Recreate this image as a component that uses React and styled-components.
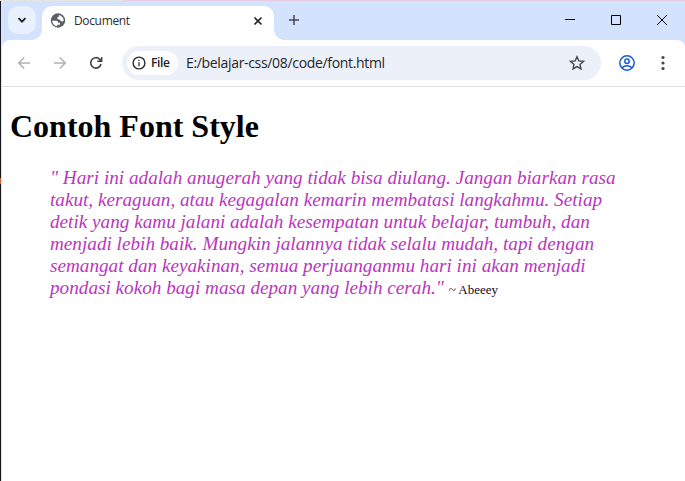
import React from "react";
import styled, { createGlobalStyle } from "styled-components";

const GlobalStyle = createGlobalStyle`
  * { box-sizing: border-box; }
  body { margin: 0; background: #fff; overflow: hidden; }
`;

const Desktop = styled.div`
  width: 685px;
  height: 481px;
  display: flex;
  flex-direction: column;
  background: linear-gradient(#181620 0 178px, #c9683e 178px 184px, #181620 184px);
`;

const TopEdge = styled.div`
  height: 1px;
  flex: none;
  background: linear-gradient(90deg, #e4e4e2 0 123px, #e6cbe2 123px);
`;

const Window = styled.div`
  flex: 1;
  margin-left: 1px;
  border-left: 1px solid #eadfe8;
  display: flex;
  flex-direction: column;
  background: #fff;
`;

const TabStrip = styled.div`
  height: 39px;
  flex: none;
  display: flex;
  align-items: flex-start;
  background: #d3e2fd;
`;

const TabSearch = styled.button`
  width: 28px;
  height: 28px;
  margin: 5px 0 0 6px;
  padding: 0;
  border: 0;
  border-radius: 10px;
  background: #e9f0fe;
  display: grid;
  place-items: center;
`;

const Tab = styled.div`
  position: relative;
  width: 232px;
  height: 34px;
  margin: 5px 0 0 6px;
  padding: 0 11px 5px 8px;
  display: flex;
  align-items: center;
  background: #fff;
  border-radius: 10px 10px 0 0;
  &::before, &::after {
    content: "";
    position: absolute;
    bottom: 0;
    width: 10px;
    height: 10px;
  }
  &::before {
    left: -10px;
    background: radial-gradient(circle at 0 0, transparent 9.5px, #fff 10px);
  }
  &::after {
    right: -10px;
    background: radial-gradient(circle at 100% 0, transparent 9.5px, #fff 10px);
  }
`;

const TabTitle = styled.span`
  flex: 1;
  margin-left: 8px;
  font: 12px/16px "Open Sans", "Noto Sans", sans-serif;
  letter-spacing: -0.35px;
  color: #2b2d30;
`;

const NewTab = styled.div`
  margin: 13px 0 0 14px;
  display: flex;
`;

const WindowControls = styled.div`
  margin: 14px 17px 0 auto;
  display: flex;
  gap: 34px;
`;

const ToolbarFrame = styled.div`
  flex: none;
  background: #d3e2fd;
`;

const Toolbar = styled.div`
  height: 47px;
  display: flex;
  align-items: center;
  padding: 0 14px 0 14px;
  background: #fff;
  border-bottom: 1px solid #dfdfe1;
  border-radius: 8px 8px 0 0;
`;

const NavButtons = styled.div`
  display: flex;
  gap: 20px;
`;

const AddressBar = styled.div`
  width: 479px;
  height: 34px;
  margin-left: 18px;
  padding: 0 16px 0 5px;
  border-radius: 17px;
  background: #ecf0f9;
  display: flex;
  align-items: center;
`;

const FileChip = styled.div`
  width: 51px;
  height: 24px;
  padding-left: 5px;
  border-radius: 12px;
  background: #fff;
  display: flex;
  align-items: center;
  gap: 5px;
  font: 600 12px/16px "Open Sans", "Noto Sans", sans-serif;
  letter-spacing: -0.35px;
  color: #1f2023;
`;

const Url = styled.span`
  flex: 1;
  margin-left: 8px;
  font: 14px/20px "Open Sans", "Noto Sans", sans-serif;
  letter-spacing: -0.33px;
  color: #242528;
`;

const ToolbarActions = styled.div`
  margin-left: auto;
  display: flex;
  align-items: center;
  gap: 18px;
`;

const Page = styled.main`
  font-family: "Liberation Serif", serif;
  padding: 21px 8px;
`;

const Heading = styled.h1`
  margin: 0;
  font-size: 32px;
  line-height: 37px;
  color: #000;
`;

const Quote = styled.blockquote`
  margin: 22px 40px 0;
  color: #b936bd;
`;

const Line = styled.span`
  display: block;
  white-space: nowrap;
  font-size: 19.2px;
  font-style: italic;
  line-height: 22px;
  letter-spacing: ${(p) => p.$spacing || 0}px;
`;

const Author = styled.span`
  font-size: 13px;
  font-style: normal;
  letter-spacing: 0;
  color: #210322;
`;

const Icon = ({ size = 16, children }) => (
  <svg width={size} height={size} viewBox={`0 0 ${size} ${size}`} fill="none">
    {children}
  </svg>
);

const quoteLines = [
  ['" Hari ini adalah anugerah yang tidak bisa diulang. Jangan biarkan rasa', 0],
  ["takut, keraguan, atau kegagalan kemarin membatasi langkahmu. Setiap", 0],
  ["detik yang kamu jalani adalah kesempatan untuk belajar, tumbuh, dan", 0],
  ["menjadi lebih baik. Mungkin jalannya tidak selalu mudah, tapi dengan", 0],
  ["semangat dan keyakinan, semua perjuanganmu hari ini akan menjadi", 0],
];

export default function App() {
  return (
    <Desktop>
      <GlobalStyle />
      <TopEdge />
      <Window>
        <TabStrip>
          <TabSearch aria-label="Search tabs">
            <Icon size={10}>
              <path d="M1.5 3.2 5 6.7 8.5 3.2" stroke="#1d1e20" strokeWidth="1.8" />
            </Icon>
          </TabSearch>
          <Tab>
            <Icon>
              <circle cx="8" cy="7.500" r="7.200" fill="#5c6065" />
              <path d="M2.200 7.800h4c1.500 0 1.800.8 1.800 2h2v2H7.200v1.500C4.300 13 2.300 10.800 2.200 7.800z" fill="#fff" />
              <path d="M9 1.900c2.600.5 4.600 2.700 4.700 5.600-.5 1-1.400 1.200-2.300.8-.8-.3-.9-1.200-1.500-1.600C9 6.300 7.300 6.600 7.200 5.300 7.100 4.200 8.600 4.400 8.900 3.500z" fill="#fff" />
            </Icon>
            <TabTitle>Document</TabTitle>
            <Icon size={10}>
              <path d="M1.500 1.500 8.500 8.500M8.500 1.500 1.500 8.500" stroke="#242528" strokeWidth="1.7" />
            </Icon>
          </Tab>
          <NewTab>
            <Icon size={12}>
              <path d="M6 1v10M1 6h10" stroke="#43474d" strokeWidth="1.500" />
            </Icon>
          </NewTab>
          <WindowControls>
            <Icon size={12}><path d="M1 4.500h10" stroke="#000" /></Icon>
            <Icon size={12}><path d="M1.500.5h9v9h-9z" stroke="#000" /></Icon>
            <Icon size={12}><path d="m1 0 10 10M11 0 1 10" stroke="#000" /></Icon>
          </WindowControls>
        </TabStrip>
        <ToolbarFrame>
          <Toolbar>
            <NavButtons>
              <Icon><path d="M14 8H3M8.200 2.500 2.700 8l5.500 5.500" stroke="#b0b1b3" strokeWidth="1.500" /></Icon>
              <Icon><path d="M2 8h11M7.800 2.500 13.300 8l-5.500 5.500" stroke="#b0b1b3" strokeWidth="1.500" /></Icon>
              <Icon>
                <path d="M13 9a5.200 5.200 0 1 1-1.300-4.700L13.600 6.200M13.600 2v4.300H9.300" stroke="#3f4246" strokeWidth="1.600" />
              </Icon>
            </NavButtons>
            <AddressBar>
              <FileChip>
                <Icon size={14}>
                  <circle cx="7" cy="7" r="5.900" stroke="#27282b" strokeWidth="1.400" />
                  <path d="M7 6.300v3.900M7 3.700v1.400" stroke="#27282b" strokeWidth="1.300" />
                </Icon>
                File
              </FileChip>
              <Url>E:/belajar-css/08/code/font.html</Url>
              <Icon>
                <path d="m8 1.800 1.850 4.150 4.550.45-3.400 3.050.95 4.500L8 11.600l-3.950 2.350.95-4.500L1.600 6.400l4.550-.45z" stroke="#43464a" strokeWidth="1.400" />
              </Icon>
            </AddressBar>
            <ToolbarActions>
              <Icon>
                <circle cx="6.200" cy="8" r="7.200" stroke="#155bd2" strokeWidth="1.500" transform="translate(1.800 0)" />
                <circle cx="8" cy="6.300" r="2.200" stroke="#155bd2" strokeWidth="1.500" />
                <path d="M3.200 12.800c2.400-2.600 7.200-2.600 9.600 0" stroke="#155bd2" strokeWidth="1.500" />
              </Icon>
              <Icon size={18}>
                <circle cx="10" cy="3.500" r="1.600" fill="#43464a" />
                <circle cx="10" cy="9" r="1.600" fill="#43464a" />
                <circle cx="10" cy="14.500" r="1.600" fill="#43464a" />
              </Icon>
            </ToolbarActions>
          </Toolbar>
        </ToolbarFrame>
        <Page>
          <Heading>Contoh Font Style</Heading>
          <Quote>
            {quoteLines.map(([text, spacing]) => (
              <Line key={text} $spacing={spacing}>{text}</Line>
            ))}
            <Line>
              pondasi kokoh bagi masa depan yang lebih cerah." <Author>~ Abeeey</Author>
            </Line>
          </Quote>
        </Page>
      </Window>
    </Desktop>
  );
}
